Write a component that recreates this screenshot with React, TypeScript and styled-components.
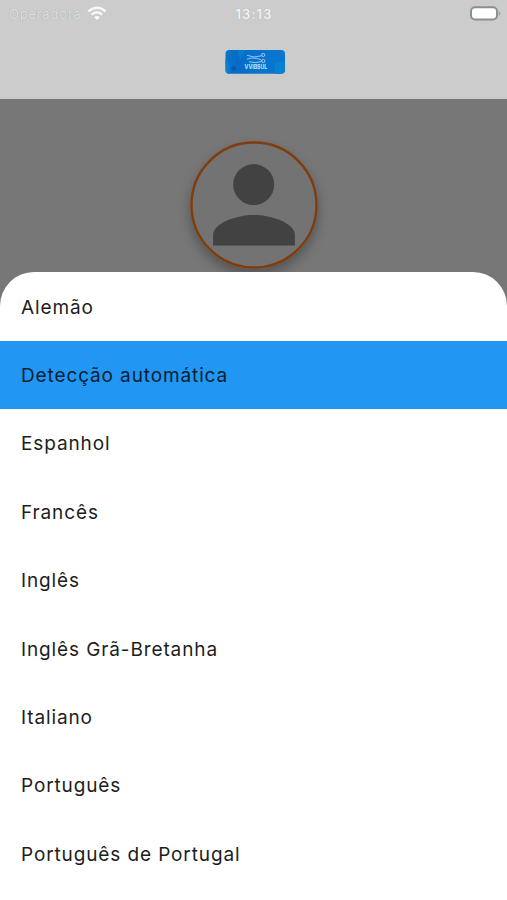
import React from 'react';
import styled, { createGlobalStyle } from 'styled-components';

const GlobalStyle = createGlobalStyle`
  * { box-sizing: border-box; }
  body { margin: 0; background: #777; }
`;

const Screen = styled.div`
  position: relative;
  display: flex;
  flex-direction: column;
  width: 507px;
  height: 900px;
  overflow: hidden;
  background: #777777;
  font-family: Inter, 'Liberation Sans', sans-serif;
`;

const Header = styled.header`
  flex: none;
  height: 98.5px;
  background: #cccccc;
`;

const StatusBar = styled.div`
  display: grid;
  grid-template-columns: 1fr auto 1fr;
  align-items: center;
  height: 27px;
  padding: 0 6px 0 9px;
  font-size: 13px;
  line-height: 16px;
`;

const Carrier = styled.div`
  display: flex;
  align-items: center;
  gap: 6px;
  letter-spacing: 0.75px;
  color: #dde0de;
  text-shadow: 0 0 1px #a2aaa6, 0 0 1px #b0b6b3;
`;

const Clock = styled.time`
  margin-right: 2px;
  color: #f5f8f6;
  font-size: 13px;
  font-weight: 500;
  letter-spacing: 1.2px;
  text-shadow: 0 0 1px #a2aaa6;
`;

const BatteryIcon = styled.svg`
  justify-self: end;
`;

const LogoBar = styled.div`
  display: flex;
  justify-content: center;
  padding: 22.5px 0 0 3px;
`;

const AvatarArea = styled.main`
  display: flex;
  justify-content: center;
  padding: 42.5px 0 0 1px;
`;

const Avatar = styled.div`
  display: flex;
  width: 128px;
  height: 128px;
  border-radius: 50%;
  background: #737373;
  box-shadow: 0 6px 12px rgba(0, 0, 0, 0.3);
`;

const Sheet = styled.ul`
  position: absolute;
  inset: 272.2px 0 0 0;
  margin: 0;
  padding: 0;
  list-style: none;
  overflow: hidden;
  background: #ffffff;
  border-radius: 34px 34px 0 0;
`;

const Option = styled.li<{ $selected: boolean }>`
  display: flex;
  align-items: center;
  height: 68.4px;
  padding: 2.6px 21px 0;
  background: ${({ $selected }) => ($selected ? '#2196f3' : 'transparent')};
  color: ${({ $selected }) => ($selected ? '#061f33' : '#1d1d1d')};
  font-size: 19px;
  line-height: 26px;
  letter-spacing: 0.88px;
`;

const languages = [
  'Alemão',
  'Detecção automática',
  'Espanhol',
  'Francês',
  'Inglês',
  'Inglês Grã-Bretanha',
  'Italiano',
  'Português',
  'Português de Portugal',
];

const WifiIcon = () => (
  <svg width="20" height="15" viewBox="0 0 20 15" fill="none" stroke="#f7f9f8" strokeWidth="2.4">
    <path d="M1.4 5.4Q10-2 18.6 5.4" />
    <path d="M4.6 8.7Q10 4 15.4 8.7" />
    <path d="M7 11.2Q10 8.8 13 11.2L10 14Z" fill="#f7f9f8" stroke="none" />
  </svg>
);

const Battery = () => (
  <BatteryIcon width="31" height="15" viewBox="0 0 31 15">
    <rect x="1" y="1.2" width="26" height="12.2" rx="4" fill="#ffffff" stroke="#87928c" strokeWidth="2" />
    <path d="M28.6 5v5q1.8-.6 1.8-2.5T28.6 5Z" fill="#9ca8a2" />
  </BatteryIcon>
);

const Logo = () => (
  <svg width="60" height="25" viewBox="0 0 60 25">
    <defs>
      <linearGradient id="brand">
        <stop offset="0" stopColor="#0876c8" />
        <stop offset=".2" stopColor="#086cc6" />
        <stop offset=".6" stopColor="#0874cf" />
        <stop offset="1" stopColor="#0877ce" />
      </linearGradient>
      <clipPath id="badge"><rect x=".5" width="59.5" height="23.8" rx="3.8" /></clipPath>
    </defs>
    <g clipPath="url(#badge)">
      <rect width="60" height="25" fill="url(#brand)" />
      <path d="M0 9Q5 12 5 25H0Z" fill="#0880d0" />
      <path d="M13 0H22Q16 2 16 10Q13 7 13 0Z" fill="#087bcd" />
      <path d="M50 13Q56 11 60 12V25H50Z" fill="#0881cf" />
      <circle cx="8.5" cy="18.5" r="2.4" fill="#0855b8" />
      <g fill="none" stroke="#a9cfeb" strokeWidth=".9">
        <path d="M22 5.3Q29 8.5 36.5 5.8" />
        <path d="M22 9.2Q27 7.2 31.5 8.3T36.8 10.4" />
        <path d="M24 11.8Q30 13.4 36.8 11.6" />
        <circle cx="38.2" cy="5" r="1.6" />
        <circle cx="38.3" cy="11" r="1.6" />
      </g>
      <text x="30.8" y="19" textAnchor="middle" fill="#cfe4f3" fontFamily="Inter, sans-serif" fontSize="5.8" fontWeight="700" textLength="22.5" lengthAdjust="spacingAndGlyphs">VVIBSUL</text>
    </g>
  </svg>
);

const PersonIcon = () => (
  <svg width="128" height="128" viewBox="0 0 128 128" fill="#424242">
    <circle cx="64" cy="64" r="62.5" fill="none" stroke="#813c0c" strokeWidth="2.4" />
    <circle cx="63.7" cy="43.6" r="20.5" />
    <path d="M23.1 104.6V94.3C23.1 81.8 47 74 64 74S104.9 81.8 104.9 94.3V104.6Z" />
  </svg>
);

export default function App() {
  return (
    <>
      <GlobalStyle />
      <Screen>
        <Header>
          <StatusBar>
            <Carrier>Operadora<WifiIcon /></Carrier>
            <Clock>13:13</Clock>
            <Battery />
          </StatusBar>
          <LogoBar><Logo /></LogoBar>
        </Header>
        <AvatarArea>
          <Avatar><PersonIcon /></Avatar>
        </AvatarArea>
        <Sheet>
          {languages.map((language, index) => (
            <Option key={language} $selected={index === 1}>{language}</Option>
          ))}
        </Sheet>
      </Screen>
    </>
  );
}
